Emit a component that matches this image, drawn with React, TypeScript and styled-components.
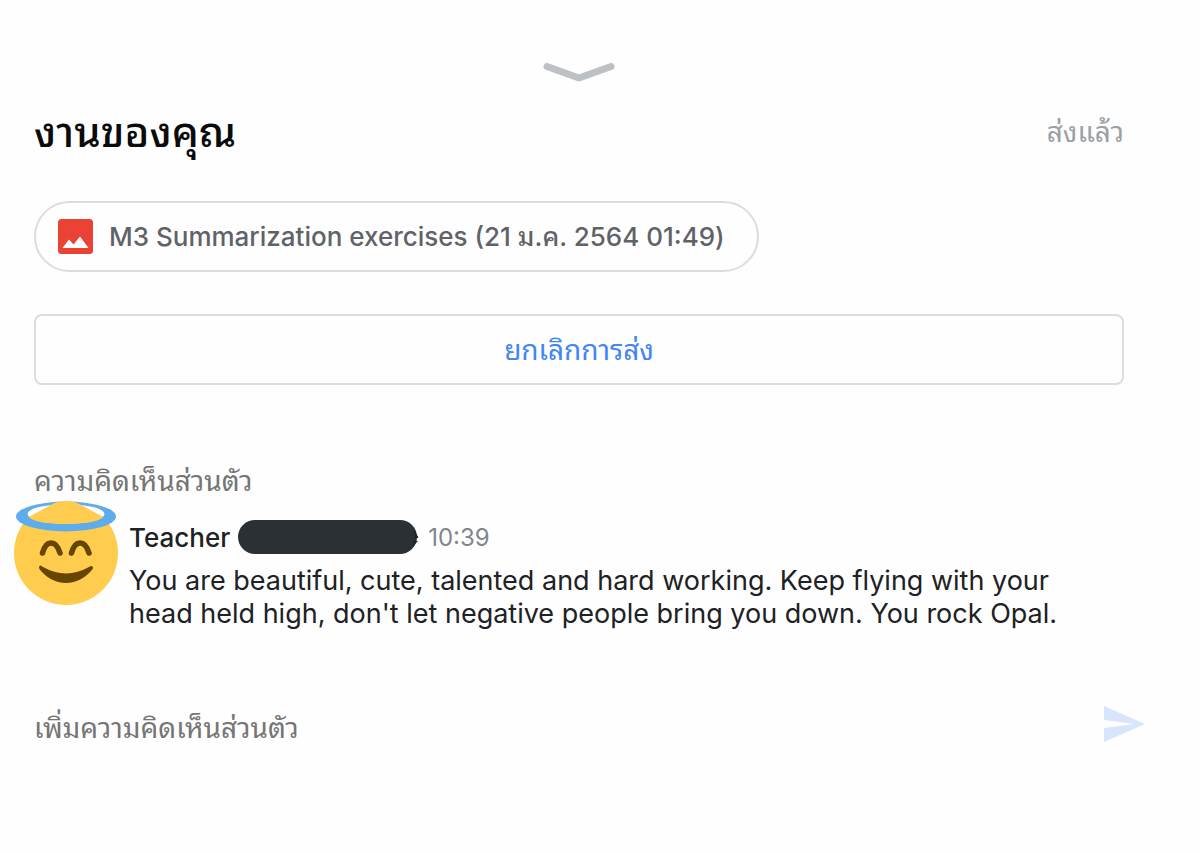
import React, { useState } from "react";
import styled, { createGlobalStyle } from "styled-components";

const GlobalStyle = createGlobalStyle`
  * { box-sizing: border-box; }
  body {
    margin: 0;
    background: #fefefe;
    color: #202124;
    font-family: Inter, "Noto Sans Thai Looped", "Noto Looped Thai", Loma, Garuda, Waree, "Noto Sans Thai", sans-serif;
  }
`;

const Page = styled.main`
  display: flex;
  flex-direction: column;
  padding: 60px 0 40px;
`;

const Section = styled.section`
  padding: 0 76px 0 34px;
`;

const CollapseButton = styled.button`
  display: block;
  margin: 0 auto;
  padding: 0;
  border: 0;
  background: none;
  height: 24px;
  svg { display: block; }
`;

const Header = styled.header`
  display: flex;
  align-items: center;
  justify-content: space-between;
  height: 64px;
  margin-top: 16px;
`;

const Title = styled.h1`
  margin: 0;
  font-size: 42px;
  line-height: 64px;
  font-weight: 500;
  color: #0b0b0b;
`;

const Status = styled.span`
  font-size: 28px;
  line-height: 40px;
  color: #9aa0a6;
`;

const Attachment = styled.a`
  display: flex;
  width: fit-content;
  align-items: center;
  gap: 16px;
  height: 71px;
  margin-top: 37px;
  padding: 0 32px 0 22px;
  border: 2px solid #dadce0;
  border-radius: 36px;
  color: #5f6368;
  font-size: 26px;
  line-height: 40px;
  font-weight: 500;
  white-space: nowrap;
  text-decoration: none;
  svg { flex: none; }
`;

const UnsubmitButton = styled.button`
  display: block;
  width: 100%;
  height: 71px;
  margin-top: 42px;
  border: 2px solid #dadce0;
  border-radius: 8px;
  background: none;
  color: #4285f4;
  font: inherit;
  font-size: 28px;
  line-height: 40px;
`;

const CommentsTitle = styled.h2`
  margin: 76px 0 0;
  font-size: 28px;
  line-height: 40px;
  font-weight: 400;
  color: #757575;
`;

const Comment = styled.article`
  display: flex;
  gap: 11px;
  padding: 0 100px 0 14px;
`;

const Avatar = styled.svg`
  flex: none;
  width: 104px;
  height: 104px;
`;

const CommentBody = styled.div`
  padding-top: 18px;
`;

const Byline = styled.div`
  display: flex;
  align-items: center;
  height: 36px;
`;

const Author = styled.span`
  font-size: 26px;
  font-weight: 500;
`;

const Redaction = styled.svg`
  flex: none;
  width: 181px;
  height: 34px;
  margin: 0 9px 0 8px;
`;

const Time = styled.time`
  font-size: 24px;
  color: #80868b;
`;

const Message = styled.p`
  margin: 9px 0 0;
  font-size: 27px;
  line-height: 33px;
`;

const CommentForm = styled.form`
  display: flex;
  align-items: flex-start;
  margin-top: 74px;
  padding: 0 54px 0 34px;
`;

const CommentInput = styled.input`
  flex: 1;
  min-width: 0;
  height: 48px;
  padding: 0;
  border: 0;
  outline: 0;
  background: none;
  color: #202124;
  font: inherit;
  font-size: 28px;
  &::placeholder { color: #757575; opacity: 1; }
`;

const SendButton = styled.button`
  padding: 2px 0 0;
  border: 0;
  background: none;
  svg { display: block; }
`;

export default function App() {
  const [draft, setDraft] = useState("");
  return (
    <>
      <GlobalStyle />
      <Page lang="th">
        <Section>
          <CollapseButton type="button" aria-label="ย่อ">
            <svg width="72" height="24" viewBox="0 0 72 24">
              <path d="M4 6.5 36 18 68 6.5" fill="none" stroke="#bdc1c6" strokeWidth="7" strokeLinecap="round" strokeLinejoin="round" />
            </svg>
          </CollapseButton>
          <Header>
            <Title>งานของคุณ</Title>
            <Status>ส่งแล้ว</Status>
          </Header>
          <Attachment href="#attachment">
            <svg width="35" height="35" viewBox="0 0 35 35" aria-hidden="true">
              <rect width="35" height="35" rx="3.5" fill="#ea4335" />
              <path d="M4.5 29 11 20.5 15.5 25.5 22 17.5 30.5 29Z" fill="#fff" />
            </svg>
            <span>M3 Summarization exercises (21 ม.ค. 2564 01:49)</span>
          </Attachment>
          <UnsubmitButton type="button">ยกเลิกการส่ง</UnsubmitButton>
          <CommentsTitle>ความคิดเห็นส่วนตัว</CommentsTitle>
        </Section>
        <Comment>
          <Avatar viewBox="0 0 104 104" aria-hidden="true">
            <circle cx="52" cy="52" r="52" fill="#ffcc4d" />
            <path d="M0 0H104V15H88L52 10 16 15H0Z" fill="#fefefe" />
            <ellipse cx="52" cy="15.500" rx="50" ry="15" fill="#5dadec" />
            <ellipse cx="52" cy="13" rx="38.500" ry="9.800" fill="#fefefe" />
            <path d="M52 0C40 0 34 6 26 10 20 13 17 15 14.500 16 20 21 35 23 52 23S84 21 89.500 16C87 15 84 13 78 10 70 6 64 0 52 0Z" fill="#ffcc4d" />
            <path d="M28.500 52C32 38.500 42 38.500 46 52M57.500 52C61 38.500 71 38.500 75 52" fill="none" stroke="#664500" strokeWidth="5.500" strokeLinecap="round" />
            <path d="M25.500 65Q24 67 27 70C41 86 63 86 77 70Q80 67 78.500 65.500 77.500 64.500 75 66 52 79 28 65.500 26.500 64 25.500 65Z" fill="#664500" />
          </Avatar>
          <CommentBody lang="en">
            <Byline>
              <Author>Teacher</Author>
              <Redaction viewBox="0 0 181 34" aria-hidden="true">
                <rect width="179" height="34" rx="17" fill="#2b3034" />
                <path d="M176 10 180.500 17.500 177 19ZM176 20.500 180 21 175 26Z" fill="#202124" />
              </Redaction>
              <Time dateTime="10:39">10:39</Time>
            </Byline>
            <Message>
              You are beautiful, cute, talented and hard working. Keep flying with your head held high,
              don't let negative people bring you down. You rock Opal.
            </Message>
          </CommentBody>
        </Comment>
        <CommentForm onSubmit={(e) => e.preventDefault()}>
          <CommentInput
            type="text"
            aria-label="เพิ่มความคิดเห็นส่วนตัว"
            placeholder="เพิ่มความคิดเห็นส่วนตัว"
            value={draft}
            onChange={(e) => setDraft(e.target.value)}
          />
          <SendButton type="submit" aria-label="ส่ง">
            <svg width="42" height="36" viewBox="0 0 42 36">
              <path d="M0 0 41 18 0 36V22L30 18 0 14Z" fill="#d9e5fc" />
            </svg>
          </SendButton>
        </CommentForm>
      </Page>
    </>
  );
}
